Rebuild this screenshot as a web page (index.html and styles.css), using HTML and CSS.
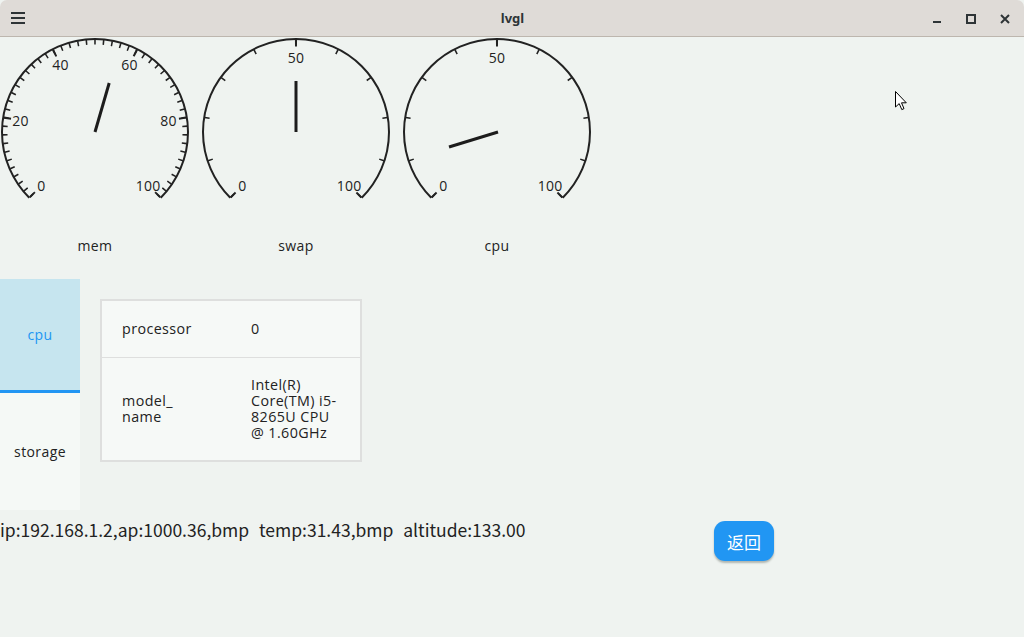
FILE: index.html
```html
<!DOCTYPE html>
<html>
<head>
<meta charset="utf-8">
<title>lvgl</title>
<link rel="stylesheet" href="styles.css">
</head>
<body>
<div class="window">
  <header class="titlebar">
    <div class="tb-left">
      <svg class="icon" width="14" height="14" viewBox="0 0 14 14"><rect x="0" y="0" width="14" height="2" fill="#2e3436"/><rect x="0" y="5" width="14" height="2" fill="#2e3436"/><rect x="0" y="10" width="14" height="2" fill="#2e3436"/></svg>
    </div>
    <div class="tb-title">lvgl</div>
    <div class="tb-right">
      <svg class="icon" width="10" height="10" viewBox="0 0 10 10"><rect x="1" y="7" width="8" height="2" fill="#2e3436"/></svg>
      <svg class="icon" width="10" height="10" viewBox="0 0 10 10"><rect x="1" y="1" width="8" height="8" fill="none" stroke="#2e3436" stroke-width="2"/></svg>
      <svg class="icon" width="10" height="10" viewBox="0 0 10 10"><path d="M1 1 L9 9 M9 1 L1 9" stroke="#2e3436" stroke-width="2"/></svg>
    </div>
  </header>

  <main class="screen">
    <section class="gauges">
      <div class="gauge">
        <svg class="dial" width="190" height="190" viewBox="0 0 190 190">
          <path class="arc" d="M29.24 160.76 A93 93 0 1 1 160.76 160.76"/>
          <path class="ticks-minor" pathLength="271.5" stroke-dasharray="1 4.4" d="M31.92 159.20 A90 90 0 1 1 157.52 159.74"/>
          <path class="ticks-major" pathLength="271.65" stroke-dasharray="1.3 52.7" d="M33.15 158.30 A88.5 88.5 0 1 1 156.48 158.66"/>
          <text x="41.3" y="148.7">0</text>
          <text x="20.5" y="83.1">20</text>
          <text x="60.5" y="27.8">40</text>
          <text x="129.5" y="27.8">60</text>
          <text x="168.5" y="83.1">80</text>
          <text x="148.2" y="148.7">100</text>
          <line class="needle" x1="95" y1="95" x2="109.2" y2="46"/>
        </svg>
        <div class="gauge-label">mem</div>
      </div>
      <div class="gauge">
        <svg class="dial" width="190" height="190" viewBox="0 0 190 190">
          <path class="arc" d="M29.24 160.76 A93 93 0 1 1 160.76 160.76"/>
          <path class="ticks-minor" pathLength="271.5" stroke-dasharray="1 26" d="M31.92 159.20 A90 90 0 1 1 157.52 159.74"/>
          <path class="ticks-major" pathLength="271.65" stroke-dasharray="1.3 133.7" d="M32.80 158.66 A89 89 0 1 1 156.83 159.02"/>
          <text x="41.3" y="148.7">0</text>
          <text x="95" y="20.5">50</text>
          <text x="148.2" y="148.7">100</text>
          <line class="needle" x1="95" y1="95" x2="95" y2="44"/>
        </svg>
        <div class="gauge-label">swap</div>
      </div>
      <div class="gauge">
        <svg class="dial" width="190" height="190" viewBox="0 0 190 190">
          <path class="arc" d="M29.24 160.76 A93 93 0 1 1 160.76 160.76"/>
          <path class="ticks-minor" pathLength="271.5" stroke-dasharray="1 26" d="M31.92 159.20 A90 90 0 1 1 157.52 159.74"/>
          <path class="ticks-major" pathLength="271.65" stroke-dasharray="1.3 133.7" d="M32.80 158.66 A89 89 0 1 1 156.83 159.02"/>
          <text x="41.3" y="148.7">0</text>
          <text x="95" y="20.5">50</text>
          <text x="148.2" y="148.7">100</text>
          <line class="needle" x1="96" y1="95" x2="47" y2="110"/>
        </svg>
        <div class="gauge-label">cpu</div>
      </div>
    </section>

    <section class="tabview">
      <nav class="tabs">
        <div class="tab active">cpu</div>
        <div class="tab">storage</div>
      </nav>
      <div class="tab-content">
        <table class="info">
          <tr>
            <td class="key">processor</td>
            <td class="val">0</td>
          </tr>
          <tr class="second">
            <td class="key">model_<br>name</td>
            <td class="val">Intel(R)<br>Core(TM) i5-<br>8265U CPU<br>@ 1.60GHz</td>
          </tr>
        </table>
      </div>
    </section>

    <section class="status">
      <div class="status-text">ip:192.168.1.2,ap:1000.36,bmp  temp:31.43,bmp  altitude:133.00</div>
      <button class="back">返回</button>
    </section>

    <svg class="cursor" width="13" height="20" viewBox="0 0 13 20"><path d="M0.5 0.5 L0.5 16 L4.2 12.6 L6.8 18.6 L9 17.6 L6.5 11.8 L11.3 11.8 Z" fill="#fff" stroke="#000" stroke-width="1"/></svg>
  </main>
</div>
</body>
</html>
```

FILE: styles.css
```css
* { box-sizing: border-box; }
html, body { margin: 0; padding: 0; }
body {
  width: 1024px;
  height: 637px;
  overflow: hidden;
  background: #eff3f0;
  font-family: "Open Sans", "Noto Sans", sans-serif;
  color: #222;
}
.window { width: 1024px; height: 637px; display: flex; flex-direction: column; }

.titlebar {
  height: 37px;
  flex: none;
  background: #dfdbd7;
  border-bottom: 1px solid #bdb6ae;
  border-radius: 7px 7px 0 0;
  display: grid;
  grid-template-columns: 1fr auto 1fr;
  align-items: center;
}
.tb-left { padding-left: 11px; display: flex; align-items: center; padding-top: 2px; }
.tb-title {
  font-family: "Noto Sans", "DejaVu Sans", sans-serif;
  font-weight: 700;
  font-size: 13px;
  color: #2e3436;
  padding-left: 1px;
}
.tb-right { display: flex; justify-content: flex-end; gap: 24px; padding-right: 14px; padding-top: 1px; }
.icon { display: block; }

.screen { position: relative; flex: 1; }

.gauges { display: flex; gap: 11px; }
.gauge { width: 190px; display: flex; flex-direction: column; align-items: center; }
.dial { display: block; overflow: visible; }
.arc { fill: none; stroke: #222; stroke-width: 2; }
.ticks-minor { fill: none; stroke: #222; stroke-width: 5; }
.ticks-major { fill: none; stroke: #222; stroke-width: 7; }
.dial text {
  font-family: "Open Sans", sans-serif;
  font-size: 14px;
  fill: #222;
  text-anchor: middle;
  dominant-baseline: central;
  letter-spacing: 0.3px;
}
.needle { stroke: #1c1c1c; stroke-width: 3; }
.gauge-label { margin-top: 10px; font-size: 14px; line-height: 18px; letter-spacing: 0.4px; }

.tabview { display: flex; margin-top: 24px; height: 231px; }
.tabs { width: 80px; display: flex; flex-direction: column; }
.tab {
  height: 117px;
  display: flex;
  align-items: center;
  justify-content: center;
  font-size: 14px;
  letter-spacing: 0.4px;
  background: #f5f9f6;
  color: #222;
}
.tab.active {
  height: 114px;
  background: #c6e5ef;
  color: #2196f3;
  border-bottom: 3px solid #2196f3;
}
.tab-content { padding: 20px; }

.info {
  border-collapse: collapse;
  background: #f6f9f7;
  border: 2px solid #dedfde;
  width: 262px;
  font-size: 14.3px;
  letter-spacing: 0.4px;
  line-height: 16px;
}
.info td { vertical-align: middle; padding: 20px 0; }
.info .key { width: 130px; padding-left: 20px; }
.info .val { padding-left: 20px; padding-right: 18px; }
.info .second td { border-top: 1px solid #dedfde; padding: 19px 0 19px 20px; }
.info .second .val { padding-right: 8px; }

.status { display: grid; grid-template-columns: 714px 60px; align-items: start; }
.status-text {
  white-space: pre;
  font-family: "Noto Sans CJK SC", "Noto Sans", sans-serif;
  font-size: 17.5px;
  line-height: 22px;
  word-spacing: 1px;
  margin-top: 9px;
  color: #222;
}
.back {
  margin-top: 11px;
  width: 60px;
  height: 40px;
  border: none;
  border-radius: 11px;
  background: #2196f3;
  color: #fff;
  font-family: "Noto Sans CJK SC", sans-serif;
  font-size: 17px;
  box-shadow: 0 2px 2px rgba(60, 70, 60, 0.35);
  padding: 0;
}

.cursor { position: absolute; left: 895px; top: 54px; }
```
